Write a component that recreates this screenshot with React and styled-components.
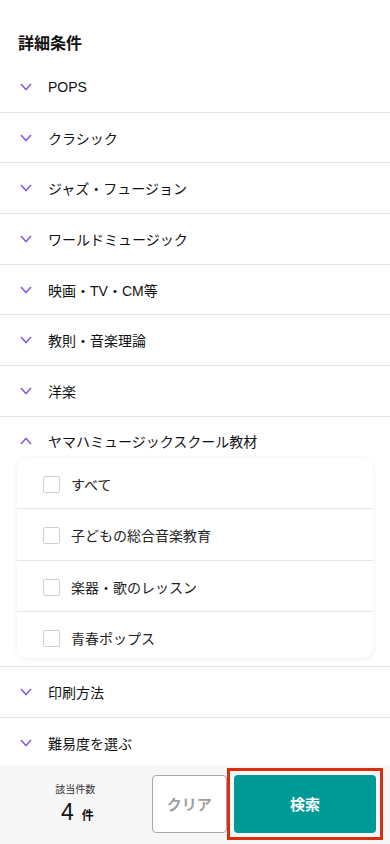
import { useState } from "react";
import styled, { createGlobalStyle } from "styled-components";

const GlobalStyle = createGlobalStyle`
  body {
    margin: 0;
    background: #fff;
    font-family: "Liberation Sans", "Noto Sans CJK JP", sans-serif;
    color: #222;
  }
`;

const categories = [
  { label: "POPS" },
  { label: "クラシック" },
  { label: "ジャズ・フュージョン" },
  { label: "ワールドミュージック" },
  { label: "映画・TV・CM等" },
  { label: "教則・音楽理論" },
  { label: "洋楽" },
  {
    label: "ヤマハミュージックスクール教材",
    options: ["すべて", "子どもの総合音楽教育", "楽器・歌のレッスン", "青春ポップス"],
  },
  { label: "印刷方法" },
  { label: "難易度を選ぶ" },
];

function Chevron({ up }) {
  return (
    <ChevronIcon width="12" height="8" viewBox="0 0 12 8">
      <path
        d={up ? "M1 7 L6 1.5 L11 7" : "M1 1 L6 6.5 L11 1"}
        fill="none"
        stroke="#8a5be6"
        strokeWidth="1.6"
      />
    </ChevronIcon>
  );
}

function Section({ item, open, onToggle }) {
  return (
    <SectionBox>
      <Header $open={open} onClick={onToggle}>
        <Chevron up={open} />
        <HeaderLabel>{item.label}</HeaderLabel>
      </Header>
      {open && item.options && (
        <Panel>
          {item.options.map((o) => (
            <Option key={o}>
              <Box />
              <OptionLabel>{o}</OptionLabel>
            </Option>
          ))}
        </Panel>
      )}
    </SectionBox>
  );
}

export default function App() {
  const [openIndex, setOpenIndex] = useState(7);
  return (
    <Page>
      <GlobalStyle />
      <Title>詳細条件</Title>
      {categories.map((c, i) => (
        <Section
          key={c.label}
          item={c}
          open={openIndex === i}
          onToggle={() => setOpenIndex(openIndex === i ? -1 : i)}
        />
      ))}
      <Footer>
        <Count>
          <CountLabel>該当件数</CountLabel>
          <CountValue>
            4<Unit>件</Unit>
          </CountValue>
        </Count>
        <ClearButton>クリア</ClearButton>
        <Highlight>
          <SearchButton>検索</SearchButton>
        </Highlight>
      </Footer>
    </Page>
  );
}

const Page = styled.div`
  padding-bottom: 80px;
`;

const Title = styled.h2`
  margin: 0;
  padding: 31px 18px 0;
  height: 31px;
  font-size: 16px;
  font-weight: 700;
  font-family: "Noto Sans CJK JP", sans-serif;
  line-height: 22px;
  color: #111;
`;

const SectionBox = styled.div`
  border-bottom: 1px solid #e4e4e4;
`;

const Header = styled.div`
  display: flex;
  align-items: center;
  box-sizing: border-box;
  height: ${(p) => (p.$open ? "41px" : "49.7px")};
  padding: ${(p) => (p.$open ? "7px 18px 0 20px" : "0 18px 0 20px")};
  cursor: pointer;
`;

const ChevronIcon = styled.svg`
  flex: none;
`;

const HeaderLabel = styled.span`
  margin-left: 16px;
  font-size: 14px;
  font-weight: 400;
  color: #111;
  font-family: "Liberation Sans", "Noto Sans CJK JP", sans-serif;
`;

const Panel = styled.div`
  margin: 0 17px 8px;
  background: #fff;
  border-radius: 10px;
  box-shadow: 0 1px 6px rgba(0, 0, 0, 0.07);
`;

const Option = styled.label`
  display: flex;
  align-items: flex-start;
  box-sizing: border-box;
  height: 51.5px;
  padding: 18px 0 0 26px;
  border-bottom: 1px solid #e6e6e6;
  &:last-child {
    height: 46px;
    border-bottom: none;
  }
`;

const Box = styled.span`
  flex: none;
  width: 15px;
  height: 15px;
  border: 1px solid #cfcfcf;
  border-radius: 2px;
  background: #fff;
`;

const OptionLabel = styled.span`
  margin-left: 11px;
  font-size: 14px;
  line-height: 17px;
  color: #222;
  font-family: "Noto Sans CJK JP", sans-serif;
`;

const Footer = styled.div`
  position: fixed;
  left: 0;
  right: 0;
  bottom: 0;
  height: 79px;
  box-sizing: border-box;
  display: flex;
  align-items: center;
  padding: 0 7px 2px 18px;
  background: #f7f7f7;
`;

const Count = styled.div`
  width: 116px;
  margin-right: 19px;
  display: flex;
  flex-direction: column;
  align-items: center;
`;

const CountLabel = styled.div`
  font-size: 10px;
  color: #333;
  font-family: "Noto Sans CJK JP", sans-serif;
`;

const CountValue = styled.div`
  margin-top: 4px;
  font-size: 23px;
  line-height: 24px;
  color: #111;
  margin-left: 4px;
`;

const Unit = styled.span`
  margin-left: 8px;
  font-size: 12px;
  font-weight: 700;
  font-family: "Noto Sans CJK JP", sans-serif;
`;

const ClearButton = styled.button`
  width: 76px;
  height: 58px;
  background: #fff;
  border: 1px solid #a8a8a8;
  border-radius: 4px;
  color: #a0a0a0;
  font-size: 15px;
  font-weight: 700;
  font-family: "Noto Sans CJK JP", sans-serif;
`;

const Highlight = styled.div`
  display: flex;
  padding: 4px;
  border: 3px solid #d8300c;
`;

const SearchButton = styled.button`
  width: 142px;
  height: 58px;
  background: #009a96;
  border: none;
  border-radius: 4px;
  color: #fff;
  font-size: 15px;
  font-weight: 700;
  font-family: "Noto Sans CJK JP", sans-serif;
`;
